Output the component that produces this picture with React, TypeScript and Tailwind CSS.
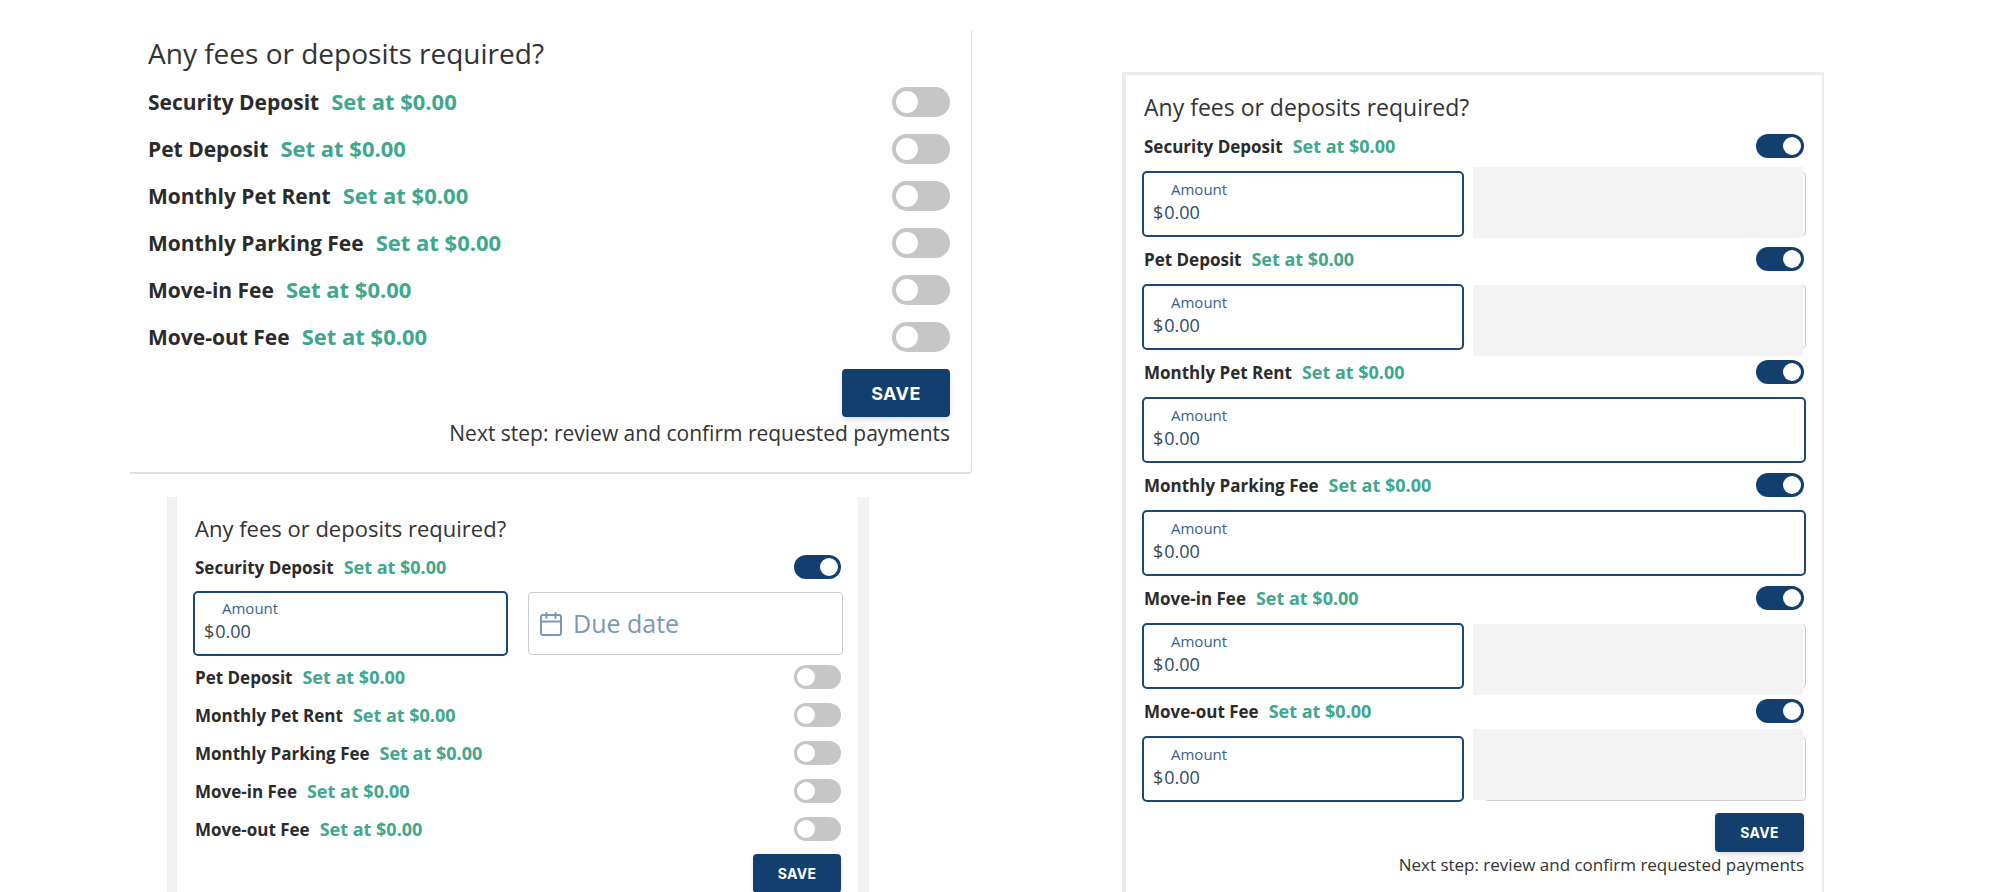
import { useId, useState } from "react";

type Size = "lg" | "sm" | "md";

interface Fee {
  name: string;
  enabled?: boolean;
  dueDate?: boolean;
  cover?: string;
}

const FEES = [
  "Security Deposit",
  "Pet Deposit",
  "Monthly Pet Rent",
  "Monthly Parking Fee",
  "Move-in Fee",
  "Move-out Fee",
];

const titleStyles: Record<Size, string> = {
  lg: "text-[28px] leading-10 mb-[5px]",
  sm: "text-[22px] leading-8 mb-1",
  md: "text-[23px] leading-[34px] mb-[3px]",
};

const rowStyles: Record<Size, string> = {
  lg: "h-[47px]",
  sm: "h-[38px]",
  md: "h-[38px]",
};

const nameStyles: Record<Size, string> = {
  lg: "text-[21px] mr-3",
  sm: "text-[17px] mr-[10px]",
  md: "text-[17px] mr-[10px]",
};

const amountStyles: Record<Size, string> = {
  lg: "text-[22px]",
  sm: "text-[18px]",
  md: "text-[18px]",
};

const switchStyles: Record<Size, string> = {
  lg: "w-[58px] h-[30px] p-1 before:size-[22px]",
  sm: "w-[47px] h-6 p-[3px] before:size-[18px]",
  md: "w-12 h-6 p-[3px] before:size-[18px]",
};

const fieldStyles: Record<Size, string> = {
  lg: "h-[66px] pt-[6px]",
  sm: "h-[65px] pt-[5px]",
  md: "h-[66px] pt-[6px]",
};

const fieldRowStyles: Record<Size, string> = {
  lg: "mt-[6px] mb-[3px]",
  sm: "mt-[5px] mb-[2px]",
  md: "mt-[6px] mb-[3px]",
};

const saveStyles: Record<Size, string> = {
  lg: "mt-[9px] h-12 w-[108px] text-[18px]",
  sm: "mt-[6px] h-[39px] w-[88px] text-[14px]",
  md: "mt-2 h-[39px] w-[89px] text-[14px]",
};

const nextStyles: Record<Size, string> = {
  lg: "mt-[2px] text-[21px] leading-7",
  sm: "mt-px text-[17px] leading-6",
  md: "mt-px text-[17px] leading-6",
};

function CalendarIcon() {
  return (
    <svg
      className="h-[26px] w-6 shrink-0"
      viewBox="0 0 24 26"
      fill="none"
      stroke="#7b97b8"
      strokeWidth="2"
      strokeLinecap="round"
      aria-hidden="true"
    >
      <rect x="2" y="4" width="20" height="20" rx="2" />
      <path d="M2 10.5h20M7.5 2v5M16.5 2v5" />
    </svg>
  );
}

function AmountField({ size }: { size: Size }) {
  const id = useId();
  return (
    <div
      className={`min-w-0 rounded-[5px] border-2 border-[#1b4878] pl-[9px] pr-2 ${fieldStyles[size]}`}
    >
      <label htmlFor={id} className="block pl-[18px] text-[15px] leading-5 text-[#3a608e]">
        Amount
      </label>
      <div className="flex gap-px text-[18px] leading-[26px]">
        <span className="text-[#444444]">$</span>
        <input
          id={id}
          defaultValue="0.00"
          className="h-[26px] min-w-0 flex-1 bg-transparent text-[#2d4a6e] outline-none"
        />
      </div>
    </div>
  );
}

function DueDateField({ cover }: { cover?: string }) {
  const id = useId();
  return (
    <div className="relative my-px flex min-w-0">
      <div className="flex min-w-0 flex-1 items-center gap-[10px] rounded-[4px] border border-[#cccccc] pl-[10px]">
        <label htmlFor={id} aria-label="Due date">
          <CalendarIcon />
        </label>
        <input
          id={id}
          placeholder={cover ? undefined : "Due date"}
          className="min-w-0 flex-1 bg-transparent pb-[2px] text-[25px] leading-8 text-[#7b97b8] outline-none placeholder:text-[#7b97b8]"
        />
      </div>
      {cover && (
        <div className={`absolute -left-[11px] right-[3px] h-[71px] bg-[#f3f3f3] ${cover}`} />
      )}
    </div>
  );
}

function FeeRow({ fee, size }: { fee: Fee; size: Size }) {
  const id = useId();
  const [on, setOn] = useState(Boolean(fee.enabled));
  return (
    <li>
      <div className={`flex items-center justify-between ${rowStyles[size]}`}>
        <div className="flex items-baseline pt-px font-bold">
          <label htmlFor={id} className={`text-[#2b2b2b] ${nameStyles[size]}`}>
            {fee.name}
          </label>
          <span className={`text-[#3fa78c] ${amountStyles[size]}`}>Set at $0.00</span>
        </div>
        <input
          id={id}
          type="checkbox"
          role="switch"
          checked={on}
          onChange={(e) => setOn(e.target.checked)}
          className={`flex shrink-0 cursor-pointer appearance-none items-center rounded-full bg-[#c6c6c6] before:rounded-full before:bg-white before:content-[''] checked:justify-end checked:bg-[#123f6e] ${switchStyles[size]}`}
        />
      </div>
      {on && (
        <div
          className={`-mx-0.5 grid gap-5 ${fee.dueDate ? "grid-cols-2" : "grid-cols-1"} ${fieldRowStyles[size]}`}
        >
          <AmountField size={size} />
          {fee.dueDate && <DueDateField cover={fee.cover} />}
        </div>
      )}
    </li>
  );
}

function FeesForm({ fees, size, hint }: { fees: Fee[]; size: Size; hint?: string }) {
  return (
    <form onSubmit={(e) => e.preventDefault()}>
      <h2 className={`font-normal text-[#333333] ${titleStyles[size]}`}>
        Any fees or deposits required?
      </h2>
      <ul>
        {fees.map((fee) => (
          <FeeRow key={fee.name} fee={fee} size={size} />
        ))}
      </ul>
      <div className="flex flex-col items-end">
        <button
          type="submit"
          className={`rounded-[4px] bg-[#123f6e] font-['Inter',sans-serif] font-bold tracking-wide text-white shadow-md ${saveStyles[size]}`}
        >
          SAVE
        </button>
        {hint && <p className={`text-[#333333] ${nextStyles[size]}`}>{hint}</p>}
      </div>
    </form>
  );
}

const NEXT_STEP = "Next step: review and confirm requested payments";

const closedFees: Fee[] = FEES.map((name) => ({ name }));

const firstOpenFees: Fee[] = FEES.map((name, i) =>
  i === 0 ? { name, enabled: true, dueDate: true } : { name },
);

const covers: Record<string, string> = {
  "Security Deposit": "-top-[5px]",
  "Pet Deposit": "top-0",
  "Move-in Fee": "top-0",
  "Move-out Fee": "-top-2",
};

const allOpenFees: Fee[] = FEES.map((name) => ({
  name,
  enabled: true,
  dueDate: name in covers,
  cover: covers[name],
}));

export default function App() {
  return (
    <main className="grid h-screen grid-cols-[842fr_702fr] gap-x-[150px] overflow-hidden bg-white pl-[130px] pr-[180px] font-['Open_Sans','Noto_Sans',sans-serif]">
      <div className="flex min-w-0 flex-col pt-[30px]">
        <section className="rounded-br-[4px] border-r border-b-2 border-[#e0e0e0] bg-[#fefefe] pt-[3px] pr-[21px] pb-[25px] pl-[18px]">
          <FeesForm fees={closedFees} size="lg" hint={NEXT_STEP} />
        </section>
        <section className="mt-[23px] mr-[103px] ml-[37px] flex-1 border-r-[11px] border-l-[10px] border-[#f2f2f2] bg-[#fefefe] pt-[15px] pr-[17px] pl-[18px]">
          <FeesForm fees={firstOpenFees} size="sm" />
        </section>
      </div>
      <section className="mt-[72px] min-w-0 border-t-[3px] border-r-2 border-l-4 border-[#ececec] bg-[#fefefe] px-[18px] pt-[15px]">
        <FeesForm fees={allOpenFees} size="md" hint={NEXT_STEP} />
      </section>
    </main>
  );
}
